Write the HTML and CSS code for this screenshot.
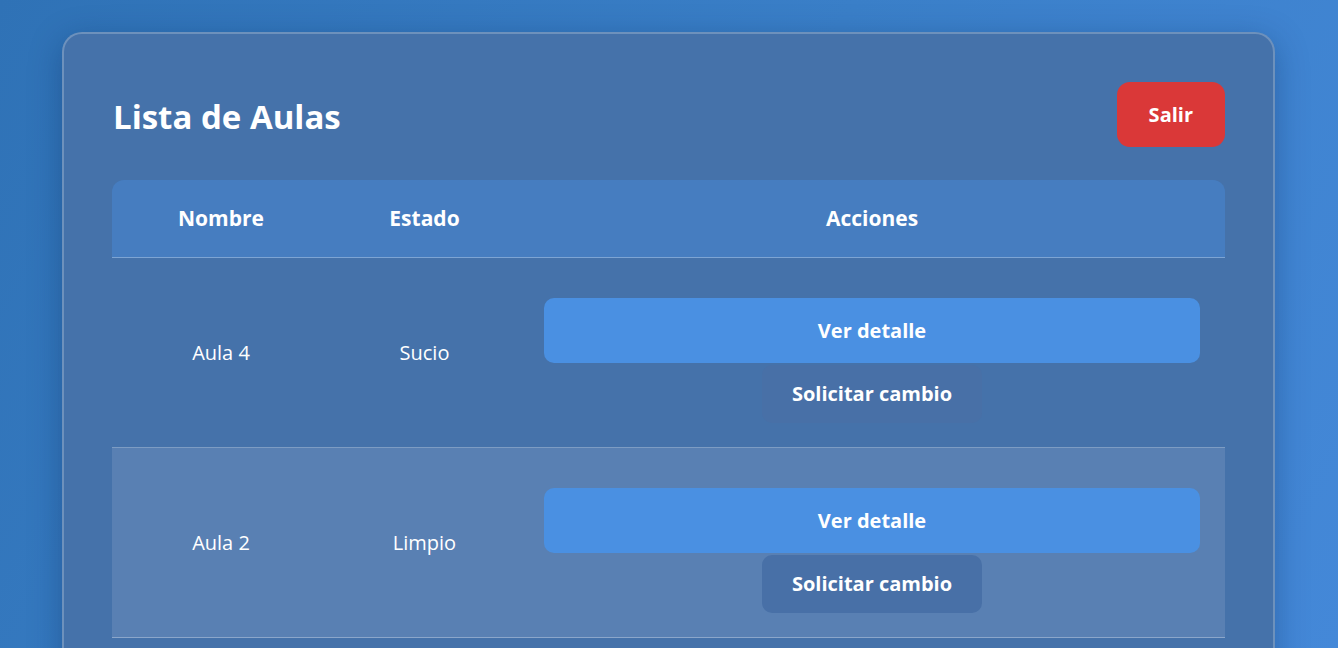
FILE: index.html
```html
<!DOCTYPE html>
<html lang="es">
<head>
<meta charset="utf-8">
<title>Lista de Aulas</title>
<link rel="stylesheet" href="styles.css">
</head>
<body>
<div class="card">
  <div class="header">
    <h1 class="title">Lista de Aulas</h1>
    <button class="btn btn-exit">Salir</button>
  </div>
  <table class="table">
    <colgroup>
      <col class="col-name">
      <col class="col-state">
      <col class="col-actions">
    </colgroup>
    <thead>
      <tr>
        <th>Nombre</th>
        <th>Estado</th>
        <th>Acciones</th>
      </tr>
    </thead>
    <tbody>
      <tr>
        <td>Aula 4</td>
        <td>Sucio</td>
        <td class="actions">
          <div class="action-stack">
            <button class="btn btn-detail">Ver detalle</button>
            <button class="btn btn-change">Solicitar cambio</button>
          </div>
        </td>
      </tr>
      <tr class="alt">
        <td>Aula 2</td>
        <td>Limpio</td>
        <td class="actions">
          <div class="action-stack">
            <button class="btn btn-detail">Ver detalle</button>
            <button class="btn btn-change">Solicitar cambio</button>
          </div>
        </td>
      </tr>
    </tbody>
  </table>
</div>
</body>
</html>
```
FILE: styles.css
```css
* { box-sizing: border-box; }
html, body { height: 100%; }
body {
  margin: 0;
  font-family: "Open Sans", "Noto Sans", sans-serif;
  color: #fff;
  background: linear-gradient(120deg, #2f72b6 0%, #3a7fc8 50%, #4488d8 100%);
  overflow: hidden;
}
.card {
  width: 1213px;
  margin: 32px 0 0 62px;
  padding: 48px 48px 48px;
  background: #4572aa;
  border: 2px solid rgba(255,255,255,0.22);
  border-radius: 20px;
  box-shadow: 0 8px 32px rgba(10, 40, 90, 0.35);
}
.header {
  display: flex;
  align-items: center;
  justify-content: space-between;
  margin-bottom: 33px;
}
.title {
  margin: 0 0 0 1px;
  font-size: 33px;
  line-height: 40px;
  font-weight: 700;
  position: relative;
  top: 2px;
}
.btn {
  font-family: inherit;
  font-weight: 700;
  font-size: 20px;
  line-height: 25px;
  color: #fff;
  border: none;
  cursor: pointer;
}
.btn-exit {
  background: #da3838;
  padding: 20px 32px;
  border-radius: 13px;
}
.table {
  width: 100%;
  border-collapse: collapse;
  table-layout: fixed;
}
.col-name { width: 218px; }
.col-state { width: 189px; }
.table thead tr { background: #467dc0; }
.table th {
  font-size: 21px;
  font-weight: 700;
  line-height: 25px;
  padding: 26px 0;
  border-bottom: 1px solid rgba(255,255,255,0.3);
}
.table th:first-child { border-top-left-radius: 12px; }
.table th:last-child { border-top-right-radius: 12px; }
.table td {
  text-align: center;
  font-size: 20px;
  line-height: 25px;
  vertical-align: middle;
  padding: 0;
  border-bottom: 1px solid rgba(255,255,255,0.3);
}
.table tr.alt td { background: #5980b3; }
.table td.actions {
  padding: 40px 25px 24px;
}
.action-stack {
  display: flex;
  flex-direction: column;
  align-items: center;
  gap: 2px;
}
.btn-detail {
  width: 100%;
  background: #4a90e2;
  padding: 20px;
  border-radius: 10px;
}
.btn-change {
  background: #4870a7;
  padding: 16px 30px;
  line-height: 26px;
  border-radius: 10px;
}
```
